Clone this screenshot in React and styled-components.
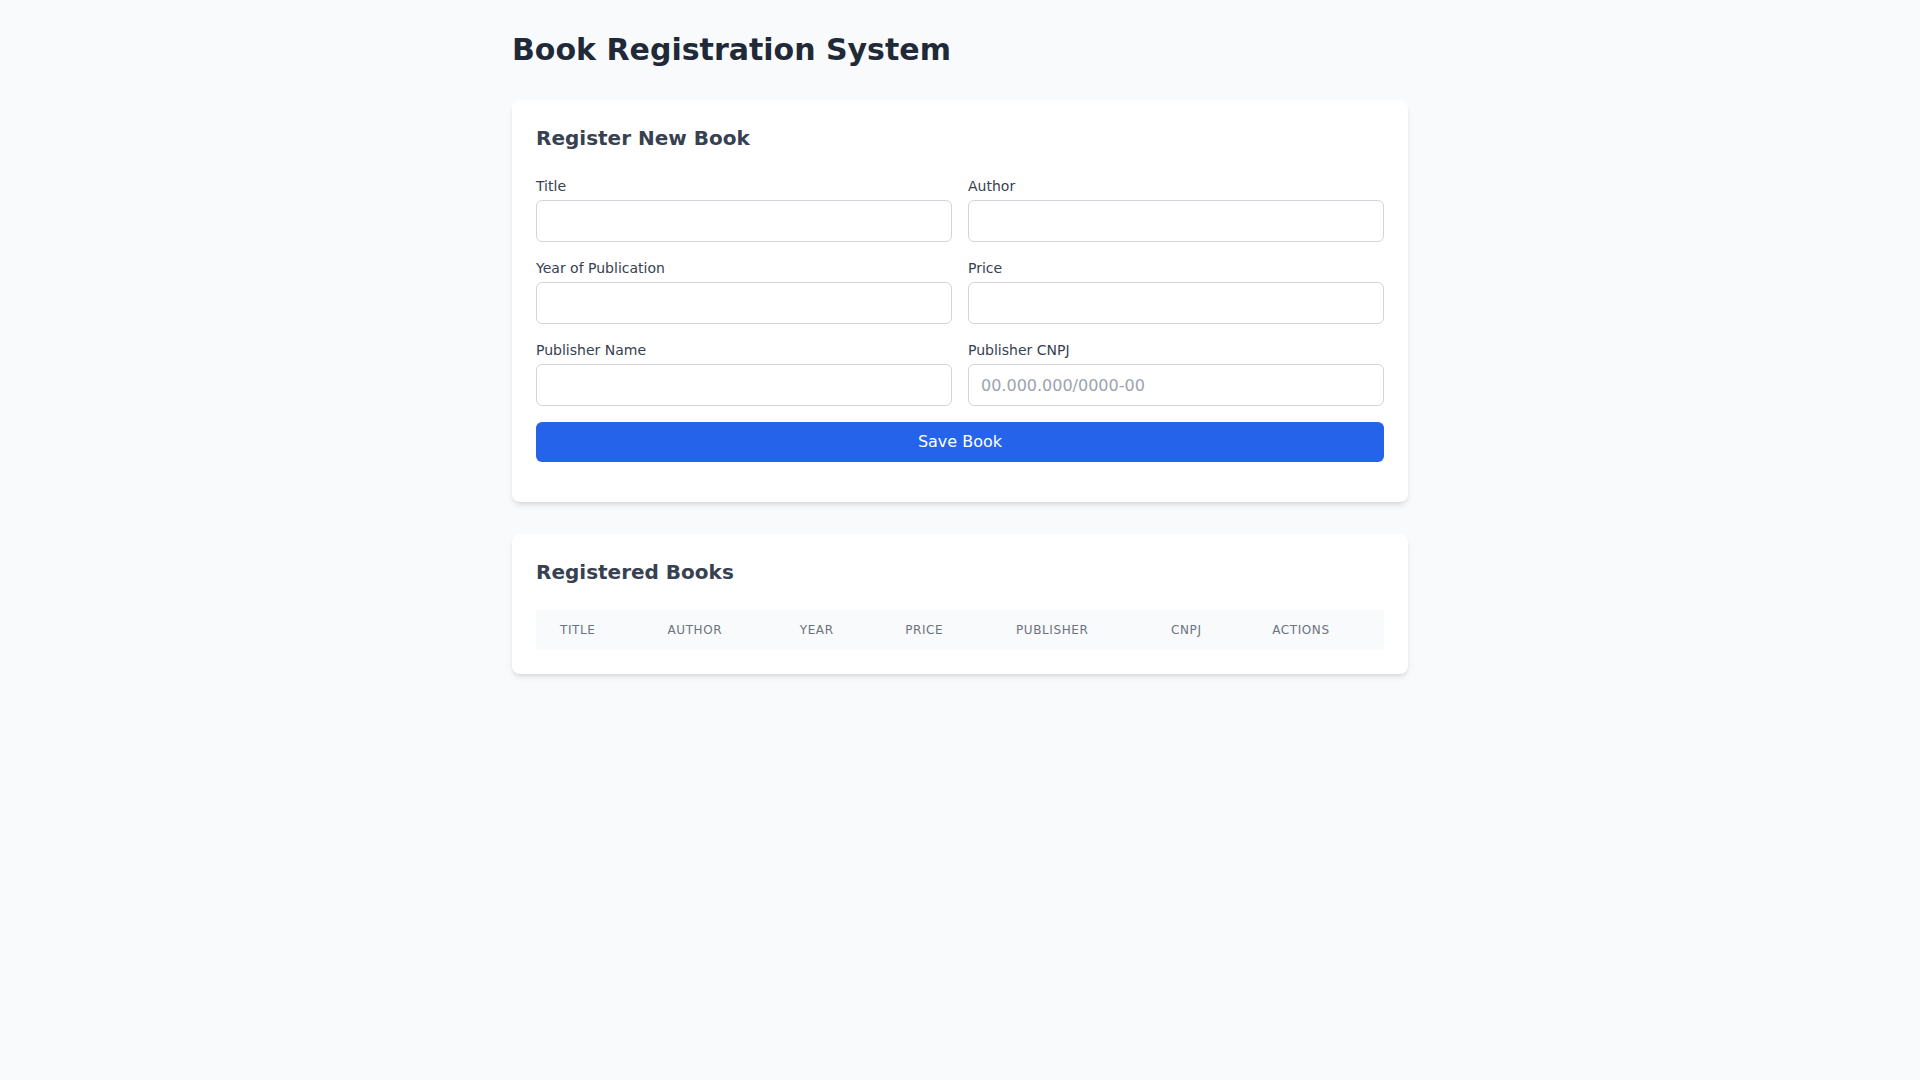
import styled, { createGlobalStyle } from 'styled-components';

const GlobalStyle = createGlobalStyle`
* {
    box-sizing: border-box;
}
body {
    margin: 0;
    font-family: "DejaVu Sans", "Noto Sans", sans-serif;
    background: #f9fafb;
}
`

export const Page = styled.div`
min-height: 100vh;
background: #f9fafb;
padding: 32px;
`

export const Container = styled.div`
max-width: 896px;
margin: 0 auto;
`

export const PageTitle = styled.h1`
margin: 0 0 32px;
font-size: 30px;
line-height: 36px;
font-weight: 700;
color: #1f2937;
`

export const Card = styled.section`
background: #ffffff;
border-radius: 8px;
box-shadow: 0 4px 6px -1px rgba(0, 0, 0, 0.1), 0 2px 4px -2px rgba(0, 0, 0, 0.1);
padding: 24px;
margin-bottom: 32px;
`

export const CardTitle = styled.h2`
margin: 0 0 24px;
font-size: 20px;
line-height: 28px;
font-weight: 600;
color: #374151;
`

export const Form = styled.form`
display: flex;
flex-direction: column;
gap: 16px;
margin-bottom: 16px;
`

export const FieldGrid = styled.div`
display: grid;
grid-template-columns: 1fr 1fr;
gap: 16px;
`

export const Field = styled.div`
display: flex;
flex-direction: column;
`

export const Label = styled.label`
font-size: 14px;
line-height: 20px;
color: #374151;
margin-bottom: 4px;
`

export const Input = styled.input`
width: 100%;
height: 42px;
padding: 8px 12px;
font-family: inherit;
font-size: 16px;
line-height: 24px;
color: #111827;
background: #ffffff;
border: 1px solid #d1d5db;
border-radius: 6px;
outline: none;

&::placeholder {
    color: #9ca3af;
}
`

export const SaveButton = styled.button`
width: 100%;
height: 40px;
padding: 8px 16px;
font-family: inherit;
font-size: 16px;
line-height: 24px;
color: #ffffff;
background: #2563eb;
border: none;
border-radius: 6px;
cursor: pointer;

&:hover {
    background: #1d4ed8;
}
`

export const Table = styled.table`
width: 100%;
border-collapse: collapse;
`

export const HeadCell = styled.th`
padding: 12px 24px;
text-align: left;
font-size: 12px;
line-height: 16px;
font-weight: 500;
text-transform: uppercase;
letter-spacing: 0.05em;
color: #6b7280;
background: #f9fafb;
white-space: nowrap;
`

const fields = [
    { id: 'title', label: 'Title' },
    { id: 'author', label: 'Author' },
    { id: 'year', label: 'Year of Publication' },
    { id: 'price', label: 'Price' },
    { id: 'publisher', label: 'Publisher Name' },
    { id: 'cnpj', label: 'Publisher CNPJ', placeholder: '00.000.000/0000-00' },
]

const columns = ['Title', 'Author', 'Year', 'Price', 'Publisher', 'CNPJ', 'Actions']

function App() {
    return (
        <>
            <GlobalStyle />
            <Page>
                <Container>
                    <PageTitle>Book Registration System</PageTitle>
                    <Card>
                        <CardTitle>Register New Book</CardTitle>
                        <Form onSubmit={(e) => e.preventDefault()}>
                            <FieldGrid>
                                {fields.map((f) => (
                                    <Field key={f.id}>
                                        <Label htmlFor={f.id}>{f.label}</Label>
                                        <Input id={f.id} placeholder={f.placeholder} />
                                    </Field>
                                ))}
                            </FieldGrid>
                            <SaveButton type="submit">Save Book</SaveButton>
                        </Form>
                    </Card>
                    <Card>
                        <CardTitle>Registered Books</CardTitle>
                        <Table>
                            <thead>
                                <tr>
                                    {columns.map((c) => (
                                        <HeadCell key={c}>{c}</HeadCell>
                                    ))}
                                </tr>
                            </thead>
                            <tbody></tbody>
                        </Table>
                    </Card>
                </Container>
            </Page>
        </>
    );
};

export default App;
